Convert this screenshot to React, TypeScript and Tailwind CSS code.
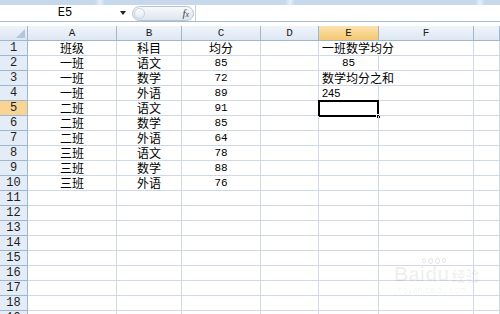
import type { ReactNode } from "react";

type Align = "center" | "left";

interface Cell {
  text?: string;
  align?: Align;
  mono?: boolean;
  small?: boolean;
  overflow?: boolean;
}

const COLS = ["A", "B", "C", "D", "E", "F", ""];

const cjk = { fontFamily: '"Noto Sans CJK SC", "Noto Sans", sans-serif' };
const mono = { fontFamily: '"Liberation Mono", "DejaVu Sans Mono", monospace' };
const sans = { fontFamily: '"Liberation Sans", Arial, sans-serif' };

const DATA: Record<number, Cell[]> = {
  1: [{ text: "班级" }, { text: "科目" }, { text: "均分" }, {}, { text: "一班数学均分", align: "left", overflow: true }],
  2: [{ text: "一班" }, { text: "语文" }, { text: "85", mono: true }, {}, { text: "85", mono: true }],
  3: [{ text: "一班" }, { text: "数学" }, { text: "72", mono: true }, {}, { text: "数学均分之和", align: "left", overflow: true }],
  4: [{ text: "一班" }, { text: "外语" }, { text: "89", mono: true }, {}, { text: "245", align: "left", small: true }],
  5: [{ text: "二班" }, { text: "语文" }, { text: "91", mono: true }],
  6: [{ text: "二班" }, { text: "数学" }, { text: "85", mono: true }],
  7: [{ text: "二班" }, { text: "外语" }, { text: "64", mono: true }],
  8: [{ text: "三班" }, { text: "语文" }, { text: "78", mono: true }],
  9: [{ text: "三班" }, { text: "数学" }, { text: "88", mono: true }],
  10: [{ text: "三班" }, { text: "外语" }, { text: "76", mono: true }],
};

function HeaderCell({ children, active }: { children?: ReactNode; active?: boolean }) {
  return (
    <div
      className={`flex h-[15px] items-center justify-center border-r border-b border-[#9eb6ce] text-[11px] leading-[14px] text-[#1e1e1e] ${
        active ? "bg-[linear-gradient(#fbe3b0,#f6c870)]" : "bg-[linear-gradient(#f1f5fb,#dde7f3)]"
      }`}
      style={mono}
    >
      {children}
    </div>
  );
}

function RowHeader({ n }: { n: number }) {
  const active = n === 5;
  return (
    <div
      className={`flex h-[15px] items-center justify-center border-r border-b border-[#9eb6ce] text-[12px] leading-[14px] text-[#1e1e1e] ${
        active ? "bg-[#f8d595]" : "bg-[#e4ecf7]"
      }`}
      style={mono}
    >
      {n}
    </div>
  );
}

function DataCell({ cell, col, row }: { cell?: Cell; col: number; row: number }) {
  const selected = col === 4 && row === 5;
  const noRight = cell?.overflow;
  return (
    <div
      className={`relative flex h-[15px] items-center border-b border-[#d0d7e5] text-[12px] leading-[14px] text-black ${
        noRight ? "" : "border-r"
      } ${cell?.align === "left" ? "justify-start pl-[3px]" : "justify-center"} ${
        cell?.overflow ? "z-10 whitespace-nowrap" : ""
      }`}
    >
      {cell?.text ? (
        <span
          className={`leading-[14px] ${cell.small || cell.mono ? "text-[11px]" : "text-[12px]"}`}
          style={cell.small ? sans : cell.mono ? mono : cjk}
        >
          {cell.text}
        </span>
      ) : null}
      {selected ? (
        <div className="pointer-events-none absolute -top-px -left-px h-[17px] w-[61px] border-2 border-black">
          <div className="absolute -right-[4px] -bottom-[4px] h-[5px] w-[5px] border border-white bg-black" />
        </div>
      ) : null}
    </div>
  );
}

export default function App() {
  const rows = Array.from({ length: 19 }, (_, i) => i + 1);
  return (
    <div className="relative h-[314px] w-[500px] overflow-hidden bg-white">
      <div className="h-[5px] bg-[linear-gradient(90deg,#c7d7ec_0%,#c7d7ec_19%,#e6eef8_20%,#c7d7ec_21%,#c7d7ec_57%,#e6eef8_58%,#c7d7ec_59%,#c7d7ec_95%,#e6eef8_96%,#c7d7ec_97%)]" />
      <div className="flex h-[17px] items-stretch border-b border-[#a8bcd4] bg-white">
        <div className="relative flex w-[130px] items-center justify-center text-[12px] text-black" style={mono}>
          E5
          <span className="absolute right-[4px] top-[6px] h-0 w-0 border-x-[3px] border-t-[4px] border-x-transparent border-t-[#222]" />
        </div>
        <div className="flex w-[65px] items-center pl-[2px]">
          <div className="relative flex h-[15px] w-[62px] items-center justify-end rounded-full border border-[#b6c2d2] bg-[linear-gradient(#f7f9fc,#dfe5ee)] pr-[4px]">
            <span className="absolute left-[1px] top-[1px] h-[11px] w-[11px] rounded-full border border-[#c6d0dc] bg-[linear-gradient(#ffffff,#e3e9f1)]" />
            <span className="text-[11px] italic leading-none text-[#444]" style={{ fontFamily: '"Liberation Serif", serif' }}>
              f<span className="text-[8px]">x</span>
            </span>
          </div>
        </div>
        <div className="flex-1 border-l border-[#c5d2e2]" />
      </div>
      <div className="h-[4px] bg-white" />
      <div className="grid grid-cols-[28px_89px_65px_79px_58px_60px_95px_1fr]">
        <div className="relative h-[15px] border-r border-b border-[#9eb6ce] bg-[linear-gradient(#eef3fa,#dbe5f2)]">
          <span className="absolute right-[2px] bottom-[2px] h-0 w-0 border-l-[9px] border-b-[9px] border-l-transparent border-b-[#b4c5d9]" />
        </div>
        {COLS.map((c, i) => (
          <HeaderCell key={i} active={c === "E"}>
            {c}
          </HeaderCell>
        ))}
        {rows.map((r) => (
          <div key={r} className="contents">
            <RowHeader n={r} />
            {COLS.map((_, ci) => (
              <DataCell key={ci} cell={DATA[r]?.[ci]} col={ci} row={r} />
            ))}
          </div>
        ))}
      </div>
      <div className="pointer-events-none absolute left-[394px] top-[258px] flex flex-col items-start text-[#000]/[0.06]">
        <div className="ml-[28px] flex gap-[2px]">
          <span className="h-[5px] w-[4px] rounded-full border border-[#000]/10" />
          <span className="h-[6px] w-[5px] rounded-full border border-[#000]/10" />
          <span className="h-[6px] w-[5px] rounded-full border border-[#000]/10" />
          <span className="h-[5px] w-[4px] rounded-full border border-[#000]/10" />
        </div>
        <div className="flex items-baseline text-[20px] font-bold leading-[20px]" style={sans}>
          Bai<span>du</span>
          <span className="ml-[2px] text-[14px]" style={cjk}>经验</span>
        </div>
        <div className="text-[9px] leading-[10px]" style={sans}>jingyan.baidu.com</div>
      </div>
    </div>
  );
}
